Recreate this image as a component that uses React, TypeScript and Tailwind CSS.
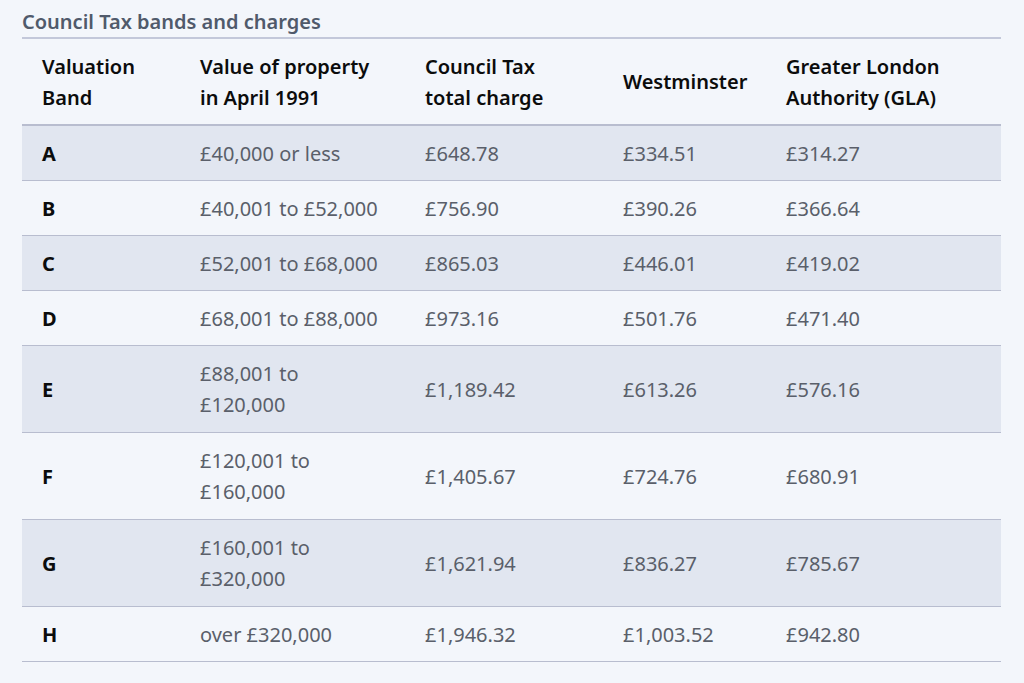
import React from "react";

const rows: { band: string; value: string[]; total: string; west: string; gla: string }[] = [
  { band: "A", value: ["£40,000 or less"], total: "£648.78", west: "£334.51", gla: "£314.27" },
  { band: "B", value: ["£40,001 to £52,000"], total: "£756.90", west: "£390.26", gla: "£366.64" },
  { band: "C", value: ["£52,001 to £68,000"], total: "£865.03", west: "£446.01", gla: "£419.02" },
  { band: "D", value: ["£68,001 to £88,000"], total: "£973.16", west: "£501.76", gla: "£471.40" },
  { band: "E", value: ["£88,001 to", "£120,000"], total: "£1,189.42", west: "£613.26", gla: "£576.16" },
  { band: "F", value: ["£120,001 to", "£160,000"], total: "£1,405.67", west: "£724.76", gla: "£680.91" },
  { band: "G", value: ["£160,001 to", "£320,000"], total: "£1,621.94", west: "£836.27", gla: "£785.67" },
  { band: "H", value: ["over £320,000"], total: "£1,946.32", west: "£1,003.52", gla: "£942.80" },
];

export default function App() {
  return (
    <div
      className="w-[1024px] h-[683px] bg-[#f3f6fb] pt-[8px] pl-[22px]"
      style={{ fontFamily: '"Noto Sans", "Open Sans", sans-serif' }}
    >
      <div className="w-[979px]">
        <div className="text-[20px] font-semibold text-[#505a6b] leading-[28px] pb-[1px] border-b-2 border-[#c3c8da]">
          Council Tax bands and charges
        </div>
        <div className="grid grid-cols-[158px_225px_198px_163px_235px] text-[20px] leading-[31px]">
          {[["Valuation", "Band"], ["Value of property", "in April 1991"], ["Council Tax", "total charge"], ["Westminster"], ["Greater London", "Authority (GLA)"]].map(
            (h, i) => (
              <div
                key={i}
                className="flex flex-col justify-center pl-[20px] h-[87px] font-semibold text-[#0b0c0c] border-b-2 border-[#b8bdcf]"
              >
                {h.map((l) => (
                  <span key={l}>{l}</span>
                ))}
              </div>
            )
          )}
          {rows.map((r, idx) => {
            const bg = idx % 2 === 0 ? "bg-[#e1e6f0]" : "bg-[#f3f6fb]";
            const h = r.value.length > 1 ? "h-[87px]" : "h-[55px]";
            const cell = `flex flex-col justify-center pl-[20px] border-b border-[#b8bdcf] ${h} ${bg}`;
            return (
              <React.Fragment key={r.band}>
                <div className={`${cell} font-bold text-[#0b0c0c]`}>{r.band}</div>
                <div className={`${cell} text-[#5a5f6a]`}>
                  {r.value.map((l) => (
                    <span key={l}>{l}</span>
                  ))}
                </div>
                <div className={`${cell} text-[#5a5f6a]`}>{r.total}</div>
                <div className={`${cell} text-[#5a5f6a]`}>{r.west}</div>
                <div className={`${cell} text-[#5a5f6a]`}>{r.gla}</div>
              </React.Fragment>
            );
          })}
        </div>
      </div>
    </div>
  );
}
